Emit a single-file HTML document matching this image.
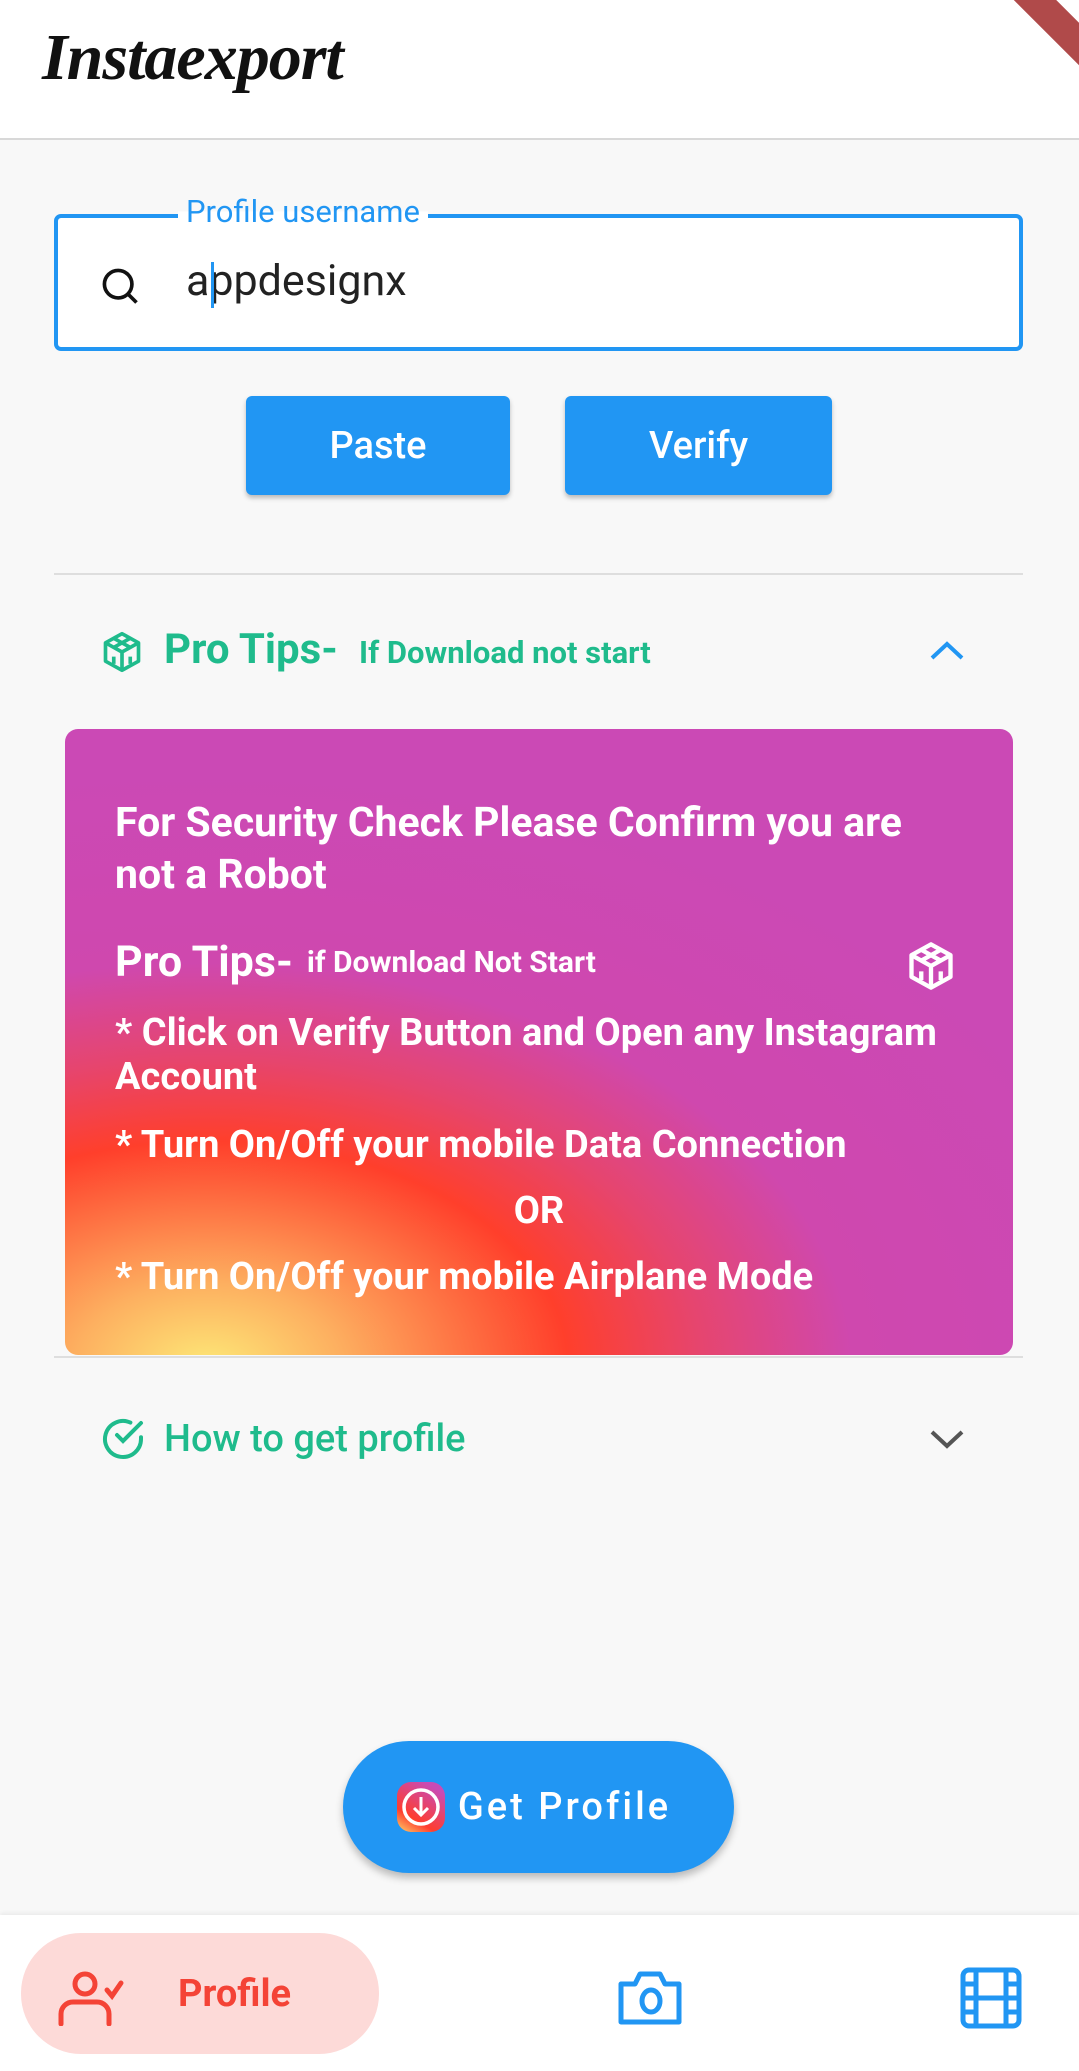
<!DOCTYPE html>
<html><head><meta charset="utf-8">
<style>
*{margin:0;padding:0;box-sizing:border-box}
body{width:1079px;height:2071px;background:#f8f8f8;font-family:"Roboto","Liberation Sans",sans-serif;position:relative;overflow:hidden}
.abs{position:absolute}
.header{left:0;top:0;width:1079px;height:140px;background:#fff;border-bottom:2px solid #d8d8d8}
.logo{left:42px;top:20px;font-family:"Liberation Serif",serif;font-style:italic;font-weight:bold;font-size:66px;color:#111;letter-spacing:-1px}
.banner{right:-40px;top:-6px;width:150px;height:30px;background:#b04a4a;transform:rotate(45deg);transform-origin:center}
.input{left:54px;top:214px;width:969px;height:137px;border:4px solid #2196f3;border-radius:7px;background:#fff}
.label{left:178px;top:193px;padding:0 8px;color:#2196f3;font-size:31px;background:linear-gradient(#f8f8f8 50%,#fff 50%)}
.val{left:186px;top:256px;font-size:43px;color:#222}
.caret{left:211px;top:262px;width:3px;height:46px;background:#2196f3}
.btn{background:#2196f3;color:#fff;font-size:38px;font-weight:500;border-radius:6px;display:flex;align-items:center;justify-content:center;box-shadow:0 3px 5px rgba(0,0,0,.25)}
.line{left:54px;width:969px;height:2px;background:#dedede}
.teal{color:#1fbb8c}
.card{left:65px;top:729px;width:948px;height:626px;border-radius:13px;background:radial-gradient(ellipse 100% 95% at 15% 102%,#fde877 0%,#fdb060 14%,#ff3f2b 38%,#e6456e 52%,#cf48ae 68%,#cb49b5 100%);color:#fff;font-weight:bold}
.card div{position:absolute;left:50px}
.fab{left:343px;top:1741px;width:391px;height:132px;border-radius:66px;background:#2196f3;box-shadow:0 5px 8px rgba(0,0,0,.25);color:#fff;font-size:38px;font-weight:500;letter-spacing:3px;display:flex;align-items:center;justify-content:center}
.nav{left:0;top:1915px;width:1079px;height:156px;background:#fff;box-shadow:0 -2px 4px rgba(0,0,0,.06)}
.pill{left:21px;top:1933px;width:358px;height:121px;border-radius:60px;background:#fddad8}
</style></head><body>
<div class="abs header"></div>
<div class="abs logo">Instaexport</div>
<div class="abs banner"></div>

<div class="abs input"></div>
<div class="abs label">Profile username</div>
<svg class="abs" style="left:98px;top:264px" width="44" height="44" viewBox="0 0 24 24" fill="none" stroke="#111" stroke-width="2"><circle cx="11" cy="11" r="7.5"/><path d="M16.5 16.5L21 21"/></svg>
<div class="abs val">appdesignx</div>
<div class="abs caret"></div>

<div class="abs btn" style="left:246px;top:396px;width:264px;height:99px">Paste</div>
<div class="abs btn" style="left:565px;top:396px;width:267px;height:99px">Verify</div>

<div class="abs line" style="top:573px"></div>

<svg class="abs" style="left:100px;top:629px" width="44" height="46" viewBox="0 0 24 24" fill="none" stroke="#1fbb8c" stroke-width="2" stroke-linejoin="round"><path d="M12 2l9 5v10l-9 5-9-5V7z"/><path d="M3 7l9 5 9-5M12 12v10M7.5 4.5l9 5M16.5 4.5l-9 5M7.5 14.5v4M16.5 14.5v4"/></svg>
<div class="abs teal" style="left:164px;top:625px;font-size:42px;font-weight:bold">Pro Tips-</div>
<div class="abs teal" style="left:359px;top:634px;font-size:31px;font-weight:bold">If Download not start</div>
<svg class="abs" style="left:928px;top:638px" width="38" height="26" viewBox="0 0 38 26" fill="none" stroke="#2196f3" stroke-width="4"><path d="M4 20L19 6l15 14"/></svg>

<div class="abs card">
<div style="top:68px;font-size:41px;line-height:52px;width:830px">For Security Check Please Confirm you are not a Robot</div>
<div style="top:208px;font-size:43px;font-weight:bold">Pro Tips-<span style="font-size:30px;font-weight:bold;margin-left:14px;vertical-align:4px">if Download Not Start</span></div>
<div style="top:282px;font-size:38px;line-height:44px;width:890px">* Click on Verify Button and Open any Instagram Account</div>
<div style="top:394px;font-size:38px">* Turn On/Off your mobile Data Connection</div>
<div style="top:460px;left:0;width:948px;text-align:center;font-size:38px">OR</div>
<div style="top:526px;font-size:38px">* Turn On/Off your mobile Airplane Mode</div>
<svg style="position:absolute;left:840px;top:210px" width="52" height="54" viewBox="0 0 24 24" fill="none" stroke="#fff" stroke-width="2" stroke-linejoin="round"><path d="M12 2l9 5v10l-9 5-9-5V7z"/><path d="M3 7l9 5 9-5M12 12v10M7.5 4.5l9 5M16.5 4.5l-9 5M7.5 14.5v4M16.5 14.5v4"/></svg>
</div>

<div class="abs line" style="top:1356px"></div>

<svg class="abs" style="left:99px;top:1415px" width="48" height="48" viewBox="0 0 24 24" fill="none" stroke="#1fbb8c" stroke-width="2" stroke-linecap="round"><path d="M21 11.1V12a9 9 0 1 1-5.3-8.2"/><path d="M21 4L12 13l-3-3"/></svg>
<div class="abs teal" style="left:164px;top:1417px;font-size:38px;font-weight:500">How to get profile</div>
<svg class="abs" style="left:928px;top:1426px" width="38" height="26" viewBox="0 0 38 26" fill="none" stroke="#555" stroke-width="4"><path d="M4 6l15 14 15-14"/></svg>

<div class="abs fab"><svg width="50" height="52" viewBox="0 0 50 52" style="margin-right:12px;margin-left:-10px"><defs><linearGradient id="g" x1="0" y1="1" x2="0.6" y2="0"><stop offset="0" stop-color="#fdd56b"/><stop offset="0.35" stop-color="#ff3d2e"/><stop offset="1" stop-color="#c94bb5"/></linearGradient></defs><rect x="1" y="1" width="48" height="50" rx="14" fill="url(#g)"/><circle cx="25" cy="26" r="17" fill="none" stroke="#fff" stroke-width="3.5"/><path d="M25 16v18M18 27l7 7 7-7" fill="none" stroke="#fff" stroke-width="3"/></svg>Get Profile</div>

<div class="abs nav"></div>
<div class="abs pill"></div>
<svg class="abs" style="left:57px;top:1970px" width="70" height="56" viewBox="0 0 70 56" fill="none" stroke="#f44336" stroke-width="5" stroke-linecap="round"><circle cx="28" cy="14" r="10"/><path d="M4 54V44a12 12 0 0 1 12-12h24a12 12 0 0 1 12 12v10"/><path d="M50 20l5 6 9-13"/></svg>
<div class="abs" style="left:178px;top:1972px;font-size:38px;font-weight:bold;color:#f44336">Profile</div>
<svg class="abs" style="left:617px;top:1970px" width="68" height="56" viewBox="0 0 68 56" fill="none" stroke="#2196f3" stroke-width="5" stroke-linejoin="round"><path d="M4 14h14l5-10h20l5 10h14v38H4z"/><ellipse cx="34" cy="31" rx="9" ry="11"/></svg>
<svg class="abs" style="left:960px;top:1967px" width="62" height="62" viewBox="0 0 62 62" fill="none" stroke="#2196f3" stroke-width="5"><rect x="3" y="3" width="56" height="56" rx="6"/><path d="M16 3v56M46 3v56M16 31h30M3 17h13M3 31h13M3 45h13M46 17h13M46 31h13M46 45h13"/></svg>
</body></html>
